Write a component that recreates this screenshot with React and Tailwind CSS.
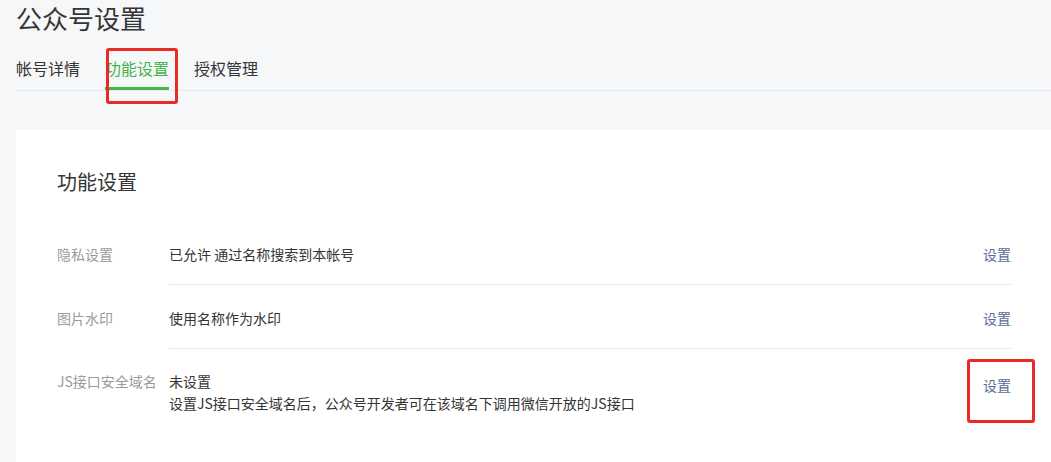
import React from "react";

const font = { fontFamily: '"Noto Sans CJK SC", "Noto Sans", sans-serif' };

const tabs = ["帐号详情", "功能设置", "授权管理"];

const rows = [
  { label: "隐私设置", lines: ["已允许 通过名称搜索到本帐号"] },
  { label: "图片水印", lines: ["使用名称作为水印"] },
  {
    label: "JS接口安全域名",
    lines: ["未设置", "设置JS接口安全域名后，公众号开发者可在该域名下调用微信开放的JS接口"],
  },
];

export default function App() {
  const active = 1;

  return (
    <div className="relative h-[462px] overflow-hidden bg-[#f6f7f9] pl-4" style={font}>
      {/* Page title */}
      <h1 className="pt-px text-[26px] leading-[34px] text-[#353535] font-normal">公众号设置</h1>

      {/* Tabs */}
      <div className="mt-[21px] flex gap-[25px] border-b border-[#e4e8eb]">
        {tabs.map((t, i) => (
          <div key={t} className="flex flex-col">
            <span className={`text-base leading-6 ${i === active ? "text-[#44b549]" : "text-[#353535]"}`}>{t}</span>
            <div className={`mt-[7px] h-[3px] ${i === active ? "bg-[#44b549]" : "bg-transparent"}`} />
          </div>
        ))}
      </div>

      {/* Card */}
      <div className="mt-[39px] bg-white pl-[41px] pr-10 pt-[38px] h-[400px]">
        <h2 className="text-[20px] leading-7 text-[#353535] font-normal">功能设置</h2>
        <div className="mt-[25px]">
          {rows.map((r, i) => {
            const last = i === rows.length - 1;
            const multi = r.lines.length > 1;
            return (
              <div key={r.label} className="flex text-sm">
                <div className={`w-[112px] shrink-0 text-[#9a9a9a] pt-[21px] ${multi ? "leading-[22px]" : "leading-6"}`}>
                  {r.label}
                </div>
                <div className={`flex flex-1 items-start justify-between pt-[21px] pb-[18px] ${last ? "" : "border-b border-[#e7e7eb]"}`}>
                  <div className={`text-[#353535] ${multi ? "leading-[22px]" : "leading-6"}`}>
                    {r.lines.map((l) => (
                      <div key={l}>{l}</div>
                    ))}
                  </div>
                  <a className={`text-[#576b95] ${multi ? "mt-[4px] leading-[22px]" : "leading-6"}`}>设置</a>
                </div>
              </div>
            );
          })}
        </div>
      </div>

      {/* Annotation boxes */}
      <div className="absolute left-[106px] top-[48px] h-[56px] w-[72px] rounded-[3px] border-[3px] border-[#ea2a25]" />
      <div className="absolute left-[967px] top-[359px] h-[64px] w-[68px] rounded-[3px] border-[3px] border-[#ea2a25]" />
    </div>
  );
}
